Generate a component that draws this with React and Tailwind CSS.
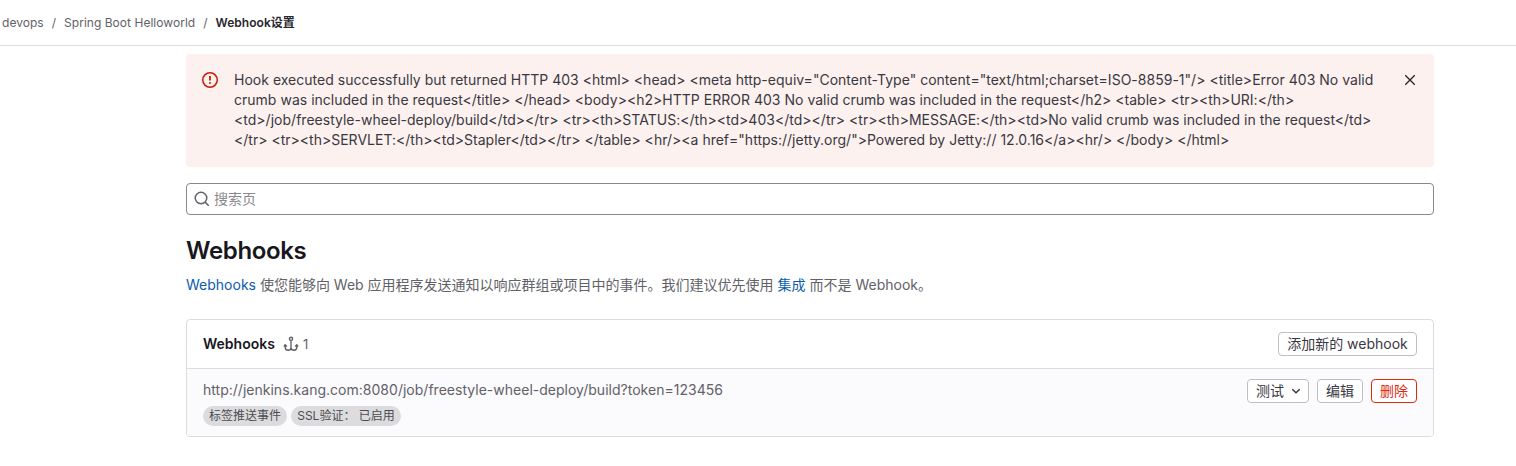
const Btn = ({ children, danger = false, className = '' }) => (
  <button
    className={`flex h-6 items-center justify-center rounded border bg-white text-sm leading-4 whitespace-nowrap ${danger ? 'border-[#dd2b0e] text-[#dd2b0e]' : 'border-[#bfbfc3] text-[#3a383f]'} ${className}`}
  >
    {children}
  </button>
);

const Badge = ({ children, className }) => (
  <span className={`flex h-5 items-center justify-center rounded-full bg-[#dcdcde] text-xs whitespace-nowrap text-[#4c4b51] ${className}`}>
    {children}
  </span>
);

export default function App() {
  return (
    <div className="h-[466px] overflow-hidden bg-white font-['Inter','Noto_Sans_CJK_SC',sans-serif] text-sm leading-5 text-[#3a383f]">
      <header className="flex h-[46px] items-center border-b border-[#dcdcde] pl-0.5 text-xs tracking-[0.03px] text-[#626168]">
        <span>devops</span>
        <span className="mx-2">/</span>
        <span>Spring Boot Helloworld</span>
        <span className="mx-2">/</span>
        <span className="font-semibold text-[#28272d]">Webhook设置</span>
      </header>
      <main className="ml-[186px] w-[1248px]">
        <section className="mt-2 flex h-[113px] rounded bg-[#fcf1ef] pt-4">
          <svg className="mt-0.5 ml-4 size-4 shrink-0" viewBox="0 0 16 16" fill="none" stroke="#c91c00">
            <circle cx="8" cy="8" r="7.25" strokeWidth="1.5" />
            <path d="M8 4v4.5" strokeWidth="1.8" />
            <circle cx="8" cy="11" r="1" fill="#c91c00" stroke="none" />
          </svg>
          <p className="ml-4 w-[1152px] shrink-0 tracking-[0.016px] whitespace-nowrap">
            {'Hook executed successfully but returned HTTP 403 <html> <head> <meta http-equiv="Content-Type" content="text/html;charset=ISO-8859-1"/> <title>Error 403 No valid'}<br />
            {'crumb was included in the request</title> </head> <body><h2>HTTP ERROR 403 No valid crumb was included in the request</h2> <table> <tr><th>URI:</th>'}<br />
            {'<td>/job/freestyle-wheel-deploy/build</td></tr> <tr><th>STATUS:</th><td>403</td></tr> <tr><th>MESSAGE:</th><td>No valid crumb was included in the request</td>'}<br />
            <span className="tracking-[0.006px]">{'</tr> <tr><th>SERVLET:</th><td>Stapler</td></tr> </table> <hr/><a href="https://jetty.org/">Powered by Jetty:// 12.0.16</a><hr/> </body> </html>'}</span>
          </p>
          <svg className="mt-0.5 ml-4 size-4 shrink-0" viewBox="0 0 16 16" fill="none" stroke="#28272d" strokeWidth="1.4">
            <path d="m3.25 3.25 9.5 9.5M12.75 3.25l-9.5 9.5" />
          </svg>
        </section>
        <div className="mt-4 flex h-8 items-center rounded border border-[#89888d] pl-[7px] text-[#89888d]">
          <svg className="size-4" viewBox="0 0 16 16" fill="none" stroke="#626168" strokeWidth="1.5">
            <circle cx="7" cy="7" r="5.75" />
            <path d="m11.1 11.1 3.6 3.6" />
          </svg>
          <span className="ml-1">搜索页</span>
        </div>
        <h1 className="mt-5 text-2xl leading-8 font-semibold tracking-[-0.35px] text-[#18171d]">Webhooks</h1>
        <p className="mt-2 whitespace-nowrap text-[#626168]">
          <a className="text-[#0b5cad]">Webhooks</a> 使您能够向 Web 应用程序发送通知以响应群组或项目中的事件。我们建议优先使用 <a className="text-[#0b5cad]">集成</a> 而不是 Webhook。
        </p>
        <section className="mt-6 h-[118px] overflow-hidden rounded border border-[#dcdcde]">
          <div className="flex h-[49px] items-center border-b border-[#dcdcde] px-4">
            <h2 className="font-semibold text-[#18171d]">Webhooks</h2>
            <svg className="ml-2 size-4" viewBox="0 0 16 16" fill="none" stroke="#626168" strokeWidth="1.4">
              <circle cx="8" cy="2.8" r="1.6" />
              <path d="M8 4.5v8.3M2.2 9v2c0 2 1.1 3.2 2.8 3.2 1.9 0 3-.8 3-2.5 0 1.7 1.1 2.5 3 2.5 1.7 0 2.8-1.2 2.8-3.2V9M.9 10.5l1.3-1.7 1.7 1.7M12.1 10.5l1.7-1.7 1.3 1.7" />
            </svg>
            <span className="ml-1 text-[13px] text-[#626168]">1</span>
            <Btn className="ml-auto w-[139px]">添加新的 webhook</Btn>
          </div>
          <div className="flex h-[67px] justify-between bg-[#fbfafd] px-4">
            <div className="pt-[11px]">
              <p className="tracking-[0.014px] text-[#626168]">http://jenkins.kang.com:8080/job/freestyle-wheel-deploy/build?token=123456</p>
              <div className="mt-1.5 flex gap-1">
                <Badge className="w-[84px]">标签推送事件</Badge>
                <Badge className="w-[110px]">SSL验证： 已启用</Badge>
              </div>
            </div>
            <div className="mt-2.5 flex gap-2">
              <Btn className="w-[62px] gap-1 pl-1">
                测试
                <svg className="size-4" viewBox="0 0 16 16" fill="none" stroke="#3a383f" strokeWidth="1.5"><path d="m4.25 6.25 3.75 3.5 3.75-3.5" /></svg>
              </Btn>
              <Btn className="w-[46px]">编辑</Btn>
              <Btn danger className="w-[46px]">删除</Btn>
            </div>
          </div>
        </section>
      </main>
    </div>
  );
}
